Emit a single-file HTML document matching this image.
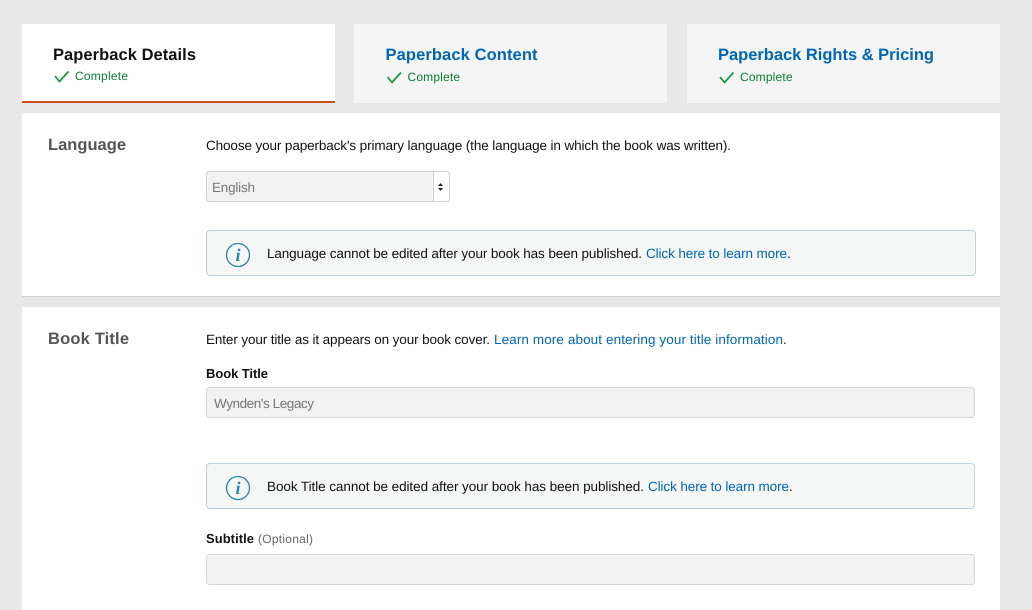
<!DOCTYPE html>
<html lang="en">
<head>
<meta charset="utf-8">
<title>Paperback Details</title>
<style>
html,body{margin:0;padding:0;width:1032px;height:610px;overflow:hidden;background:#e8e8e8}
svg{display:block}
text{font-family:"Liberation Sans",sans-serif;font-size:13.5px;fill:#111;text-rendering:geometricPrecision}
.b{font-weight:700}
.tab{font-size:16.5px;font-weight:700}
.lnk{fill:#0066b8}
.ok{font-size:12px;fill:#0a7d32}
.h{font-size:16.5px;font-weight:700;fill:#555}
.g{fill:#777}
</style>
</head>
<body>
<svg width="1032" height="610" viewBox="0 0 1032 610" xmlns="http://www.w3.org/2000/svg">
<rect x="0" y="0" width="1032" height="610" fill="#e8e8e8"/>

<rect x="22" y="24" width="313" height="79" fill="#fff"/>
<rect x="22" y="101" width="313" height="2" fill="#c7511f"/>
<rect x="354" y="24" width="313" height="79" fill="#f5f5f5"/>
<rect x="687" y="24" width="313" height="79" fill="#f5f5f5"/>

<text class="tab" x="53" y="60" textLength="143" lengthAdjust="spacing">Paperback Details</text>
<path d="M55 76l4.500 5.500 9-10" fill="none" stroke="#0a9a3c" stroke-width="1.700"/>
<text class="ok" x="75" y="80" textLength="53" lengthAdjust="spacing">Complete</text>

<text class="tab lnk" x="385.500" y="60" textLength="152" lengthAdjust="spacing">Paperback Content</text>
<path d="M387.500 77l4.500 5.500 9-10" fill="none" stroke="#0a9a3c" stroke-width="1.700"/>
<text class="ok" x="407.500" y="81" textLength="52.500" lengthAdjust="spacing">Complete</text>

<text class="tab lnk" x="718" y="60" textLength="216" lengthAdjust="spacing">Paperback Rights &amp; Pricing</text>
<path d="M720 77l4.500 5.500 9-10" fill="none" stroke="#0a9a3c" stroke-width="1.700"/>
<text class="ok" x="740" y="81" textLength="52.500" lengthAdjust="spacing">Complete</text>

<rect x="22" y="113" width="978" height="183" fill="#fff"/>
<rect x="22" y="296" width="978" height="1" fill="#cfcfcf"/>
<text class="h" x="48" y="150" textLength="78" lengthAdjust="spacing">Language</text>
<text x="206" y="150" textLength="525" lengthAdjust="spacing">Choose your paperback's primary language (the language in which the book was written).</text>

<rect x="206.500" y="171.500" width="243" height="30" rx="3" fill="#f2f2f2" stroke="#d0d3d6"/>
<path d="M433 172h13.500a2.500 2.500 0 0 1 2.500 2.500v24a2.500 2.500 0 0 1-2.500 2.500H433z" fill="#fff"/>
<rect x="206.500" y="171.500" width="243" height="30" rx="3" fill="none" stroke="#d0d3d6"/>
<rect x="433" y="172" width="1" height="29" fill="#d0d3d6"/>
<path d="M438 186l2.500-3 2.500 3zM438 188l2.500 3 2.500-3z" fill="#222"/>
<text class="g" x="212" y="192" textLength="43" lengthAdjust="spacing">English</text>

<rect x="206.500" y="230.500" width="769" height="45" rx="3.500" fill="#f5f6f6" stroke="#b8d2de"/>
<circle cx="238" cy="255" r="11.500" fill="none" stroke="#2a86ab" stroke-width="1.300"/>
<text x="238" y="261" text-anchor="middle" style="font-family:'Liberation Serif',serif;font-style:italic;font-weight:700;font-size:18px;fill:#2a86ab">i</text>
<text x="267" y="258" textLength="375" lengthAdjust="spacing">Language cannot be edited after your book has been published.</text>
<text class="lnk" x="646" y="258" textLength="141" lengthAdjust="spacing">Click here to learn more</text>
<text x="787" y="258">.</text>

<rect x="22" y="307" width="978" height="303" fill="#fff"/>
<text class="h" x="48" y="344" textLength="81" lengthAdjust="spacing">Book Title</text>
<text x="206" y="344" textLength="284" lengthAdjust="spacing">Enter your title as it appears on your book cover.</text>
<text class="lnk" x="494" y="344" textLength="289" lengthAdjust="spacing">Learn more about entering your title information</text>
<text x="783" y="344">.</text>

<text class="b" x="206" y="378" textLength="62" lengthAdjust="spacing" style="font-size:13px">Book Title</text>
<rect x="206.500" y="387.500" width="768" height="30" rx="3" fill="#f2f2f2" stroke="#d5d7d9"/>
<text class="g" x="214" y="408" textLength="100" lengthAdjust="spacing">Wynden's Legacy</text>

<rect x="206.500" y="463.500" width="768" height="45" rx="3.500" fill="#f5f6f6" stroke="#b8d2de"/>
<circle cx="238" cy="488" r="11.500" fill="none" stroke="#2a86ab" stroke-width="1.300"/>
<text x="238" y="494" text-anchor="middle" style="font-family:'Liberation Serif',serif;font-style:italic;font-weight:700;font-size:18px;fill:#2a86ab">i</text>
<text x="267" y="491" textLength="377" lengthAdjust="spacing">Book Title cannot be edited after your book has been published.</text>
<text class="lnk" x="648" y="491" textLength="141" lengthAdjust="spacing">Click here to learn more</text>
<text x="789" y="491">.</text>

<text class="b" x="206" y="543" textLength="48" lengthAdjust="spacing" style="font-size:13px">Subtitle</text>
<text x="258" y="543" textLength="55" lengthAdjust="spacing" style="font-size:12px;fill:#666">(Optional)</text>
<rect x="206.500" y="554.500" width="768" height="30" rx="3" fill="#f2f2f2" stroke="#d5d7d9"/>
</svg>
</body>
</html>
